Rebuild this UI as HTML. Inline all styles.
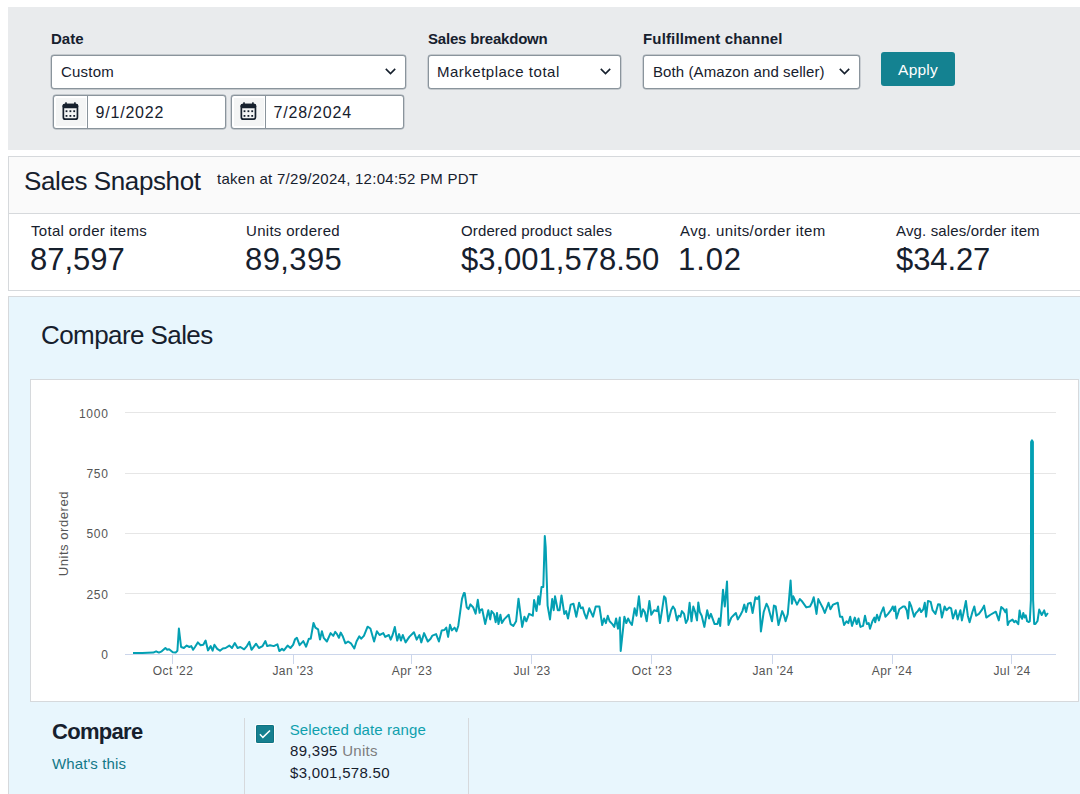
<!DOCTYPE html>
<html><head><meta charset="utf-8">
<style>
*{box-sizing:border-box;margin:0;padding:0}
html,body{width:1080px;height:794px;overflow:hidden;background:#fff;font-family:"Liberation Sans",sans-serif;color:#16202d}
.abs{position:absolute;white-space:nowrap}
#filters{position:absolute;left:8px;top:7px;width:1080px;height:143px;background:#e9ebed}
.lbl{position:absolute;font-weight:bold;font-size:15px;white-space:nowrap}
.sel{position:absolute;top:55px;height:34px;background:#fff;border:1px solid #8a949c;box-shadow:0 0 0 0.4px rgba(138,148,156,0.8);border-radius:3px;font-size:15px;padding-left:9px;line-height:32px;white-space:nowrap;letter-spacing:0.2px}
.chev{position:absolute;top:11.7px;width:11px;height:7px}
.dt{position:absolute;top:95px;height:34px;width:173px;background:#fff;border:1px solid #8a949c;box-shadow:0 0 0 0.4px rgba(138,148,156,0.8);border-radius:3px;font-size:16px;line-height:32px;white-space:nowrap;letter-spacing:0.8px}
.dt .ic{position:absolute;left:2px;top:2px;width:30px;height:28px;background:#f4f5f5}
.dt .dv{position:absolute;left:33px;top:0;width:1px;height:32px;background:#8a949c}
.dt .tx{position:absolute;left:41.5px;top:1px}
#apply{position:absolute;left:881px;top:52px;width:74px;height:34px;background:#148291;border-radius:3px;color:#fff;font-size:15.5px;line-height:36px;text-align:center;letter-spacing:0.2px}
#snap{position:absolute;left:8px;top:156px;width:1080px;height:135px;border:1px solid #d6d9dc;background:#fff}
#snaphead{position:absolute;left:0;top:0;width:100%;height:57px;background:#fafafa;border-bottom:1px solid #d6d9dc}
.ml{position:absolute;font-size:15px;white-space:nowrap;top:222px;letter-spacing:0.3px}
.mv{position:absolute;font-size:31px;white-space:nowrap;top:241.5px;letter-spacing:0px}
#cmp{position:absolute;left:8px;top:296px;width:1080px;height:510px;background:#e8f6fd;border:1px solid #d6d9dc}
#chartbox{position:absolute;left:30px;top:379px;width:1049px;height:323px;background:#fff;border:1px solid #d6d9dc}
.axl{font-family:"Liberation Sans",sans-serif;font-size:12px;fill:#555}
</style></head><body>
<div id="filters"></div>
<div class="lbl" style="left:51px;top:30px">Date</div>
<div class="sel" style="left:51px;width:355px">Custom<span style="position:absolute;left:333px;top:0"><svg class="chev" viewBox="0 0 11 7"><path d="M0.8 0.9 L5.5 5.6 L10.2 0.9" fill="none" stroke="#16202d" stroke-width="1.6"/></svg></span></div>
<div class="dt" style="left:53px"><div class="ic"></div><div class="dv"></div><span class="tx">9/1/2022</span></div>
<svg class="abs" style="left:62px;top:102px" width="18" height="20" viewBox="0 0 18 20">
<rect x="1.35" y="2.65" width="14.1" height="14.5" rx="2" fill="none" stroke="#16202d" stroke-width="1.7"/>
<rect x="0.5" y="1.8" width="15.8" height="4.4" rx="2" fill="#16202d"/>
<rect x="3.2" y="0.3" width="1.6" height="2.5" fill="#16202d"/><rect x="12.1" y="0.3" width="1.6" height="2.5" fill="#16202d"/>
<g fill="#16202d"><rect x="3.6" y="8.3" width="1.8" height="1.8"/><rect x="7.5" y="8.3" width="1.8" height="1.8"/><rect x="11.3" y="8.3" width="1.8" height="1.8"/>
<rect x="3.6" y="13" width="1.8" height="1.8"/><rect x="7.5" y="13" width="1.8" height="1.8"/><rect x="11.3" y="13" width="1.8" height="1.8"/></g>
</svg>
<div class="dt" style="left:231px"><div class="ic"></div><div class="dv"></div><span class="tx">7/28/2024</span></div>
<svg class="abs" style="left:240px;top:102px" width="18" height="20" viewBox="0 0 18 20">
<rect x="1.35" y="2.65" width="14.1" height="14.5" rx="2" fill="none" stroke="#16202d" stroke-width="1.7"/>
<rect x="0.5" y="1.8" width="15.8" height="4.4" rx="2" fill="#16202d"/>
<rect x="3.2" y="0.3" width="1.6" height="2.5" fill="#16202d"/><rect x="12.1" y="0.3" width="1.6" height="2.5" fill="#16202d"/>
<g fill="#16202d"><rect x="3.6" y="8.3" width="1.8" height="1.8"/><rect x="7.5" y="8.3" width="1.8" height="1.8"/><rect x="11.3" y="8.3" width="1.8" height="1.8"/>
<rect x="3.6" y="13" width="1.8" height="1.8"/><rect x="7.5" y="13" width="1.8" height="1.8"/><rect x="11.3" y="13" width="1.8" height="1.8"/></g>
</svg>
<div class="lbl" style="left:428px;top:30px;letter-spacing:-0.2px">Sales breakdown</div>
<div class="sel" style="left:428px;width:193px;letter-spacing:0.5px;padding-left:8px">Marketplace total<span style="position:absolute;left:171px;top:0"><svg class="chev" viewBox="0 0 11 7"><path d="M0.8 0.9 L5.5 5.6 L10.2 0.9" fill="none" stroke="#16202d" stroke-width="1.6"/></svg></span></div>
<div class="lbl" style="left:643px;top:30px;letter-spacing:0.15px">Fulfillment channel</div>
<div class="sel" style="left:643px;width:217px;letter-spacing:0.1px">Both (Amazon and seller)<span style="position:absolute;left:195px;top:0"><svg class="chev" viewBox="0 0 11 7"><path d="M0.8 0.9 L5.5 5.6 L10.2 0.9" fill="none" stroke="#16202d" stroke-width="1.6"/></svg></span></div>
<div id="apply">Apply</div>

<div id="snap"><div id="snaphead"></div></div>
<div class="abs" style="left:24px;top:166px;font-size:26px;letter-spacing:-0.4px">Sales Snapshot</div>
<div class="abs" style="left:217px;top:169.5px;font-size:15px;letter-spacing:0.27px">taken at 7/29/2024, 12:04:52 PM PDT</div>
<div class="ml" style="left:31px">Total order items</div><div class="mv" style="left:30px">87,597</div>
<div class="ml" style="left:246px">Units ordered</div><div class="mv" style="left:245px;letter-spacing:0.4px">89,395</div>
<div class="ml" style="left:461px;letter-spacing:0.13px">Ordered product sales</div><div class="mv" style="left:461px;letter-spacing:0px">$3,001,578.50</div>
<div class="ml" style="left:680px;letter-spacing:0.4px">Avg. units/order item</div><div class="mv" style="left:678px;letter-spacing:0.9px">1.02</div>
<div class="ml" style="left:896px;letter-spacing:0.15px">Avg. sales/order item</div><div class="mv" style="left:896px;letter-spacing:-0.1px">$34.27</div>

<div id="cmp"></div>
<div class="abs" style="left:41px;top:320px;font-size:26px;letter-spacing:-0.58px">Compare Sales</div>
<div id="chartbox"></div>
<svg class="abs" style="left:0;top:0" width="1080" height="794" viewBox="0 0 1080 794">
<g stroke="#e6e6e6" stroke-width="1">
<line x1="125" y1="412.5" x2="1056" y2="412.5"/>
<line x1="125" y1="473.5" x2="1056" y2="473.5"/>
<line x1="125" y1="533.5" x2="1056" y2="533.5"/>
<line x1="125" y1="593.5" x2="1056" y2="593.5"/>
</g>
<line x1="125" y1="654.5" x2="1056" y2="654.5" stroke="#ccd6eb" stroke-width="1"/>
<g stroke="#ccd6eb" stroke-width="1">
<line x1="172.5" y1="654" x2="172.5" y2="664"/><line x1="293.5" y1="654" x2="293.5" y2="664"/><line x1="411.5" y1="654" x2="411.5" y2="664"/><line x1="531.5" y1="654" x2="531.5" y2="664"/><line x1="651.5" y1="654" x2="651.5" y2="664"/><line x1="772.5" y1="654" x2="772.5" y2="664"/><line x1="892.5" y1="654" x2="892.5" y2="664"/><line x1="1011.5" y1="654" x2="1011.5" y2="664"/>
</g>
<g class="axl" text-anchor="end" style="letter-spacing:0.8px">
<text x="108.8" y="418">1000</text><text x="108.8" y="478">750</text><text x="108.8" y="538">500</text><text x="108.8" y="599">250</text><text x="108.8" y="659">0</text>
</g>
<text class="axl" transform="translate(68,533.6) rotate(-90)" text-anchor="middle" style="font-size:13px;letter-spacing:0.55px">Units ordered</text>
<g class="axl" text-anchor="middle" style="letter-spacing:0.4px">
<text x="173" y="674.5">Oct '22</text><text x="293" y="674.5">Jan '23</text><text x="412" y="674.5">Apr '23</text><text x="532" y="674.5">Jul '23</text><text x="652" y="674.5">Oct '23</text><text x="773" y="674.5">Jan '24</text><text x="892" y="674.5">Apr '24</text><text x="1012" y="674.5">Jul '24</text>
</g>
<path d="M133.0,653.1 L142.2,653.1 L153.3,652.6 L156.1,651.3 L158.9,652.6 L161.7,651.3 L165.4,648.0 L167.2,649.8 L169.1,649.3 L172.8,652.2 L175.6,652.6 L177.4,650.7 L178.9,628.5 L181.1,647.0 L183.9,648.0 L186.7,645.6 L189.4,647.0 L191.3,646.1 L193.1,649.8 L195.0,647.0 L197.8,642.4 L200.6,645.2 L203.3,644.8 L205.6,640.6 L208.0,650.4 L210.7,646.1 L212.6,650.7 L214.4,644.8 L217.2,648.9 L220.0,650.7 L222.8,648.5 L225.6,648.0 L229.3,645.6 L232.0,648.0 L234.8,643.0 L237.6,648.0 L240.4,647.0 L244.1,649.3 L246.9,646.1 L249.3,641.9 L251.5,649.8 L256.1,643.7 L258.9,648.0 L262.6,646.1 L265.4,641.1 L267.2,646.1 L270.0,645.2 L273.7,646.1 L277.4,644.3 L279.3,651.1 L282.0,648.9 L283.9,650.4 L287.6,645.6 L290.4,648.0 L293.1,644.8 L295.0,639.3 L296.9,637.8 L299.6,645.2 L303.3,641.1 L306.1,646.7 L308.9,638.7 L310.7,638.7 L313.5,623.0 L315.4,627.6 L318.1,629.4 L320.0,639.6 L321.9,631.3 L323.7,637.8 L326.9,641.5 L330.6,633.1 L333.3,635.9 L335.2,631.9 L337.0,634.1 L338.9,637.8 L340.7,632.6 L342.6,635.9 L345.4,643.3 L348.1,641.5 L350.9,643.3 L354.3,648.5 L356.5,641.5 L359.3,636.3 L361.1,638.7 L363.9,635.9 L367.6,626.7 L370.4,628.5 L374.1,641.5 L376.9,631.3 L379.6,635.0 L383.3,633.1 L385.2,636.9 L388.9,635.0 L390.7,639.6 L392.6,635.0 L394.8,627.0 L397.2,640.6 L399.1,634.1 L400.9,640.6 L402.8,635.0 L405.6,642.4 L409.3,636.9 L413.9,632.2 L416.7,639.6 L419.4,635.0 L421.3,642.4 L424.1,633.1 L427.8,641.5 L430.6,638.7 L432.4,635.6 L436.1,634.1 L438.9,641.5 L441.7,630.4 L444.4,630.0 L446.3,627.6 L448.1,636.9 L450.0,624.8 L451.9,630.4 L454.6,627.6 L456.5,631.3 L458.3,625.7 L460.2,611.9 L462.0,598.9 L463.9,593.0 L464.8,593.3 L466.7,607.2 L468.5,609.1 L470.4,604.4 L473.1,607.2 L475.6,613.7 L477.8,599.8 L479.6,612.8 L480.0,610.2 L482.2,609.3 L485.2,624.1 L488.3,610.2 L490.2,619.4 L491.5,611.1 L493.9,613.9 L495.7,622.2 L497.0,613.0 L498.5,624.1 L500.4,614.8 L501.9,623.1 L504.1,619.4 L508.7,614.8 L510.6,624.1 L513.3,625.9 L516.1,621.3 L518.5,598.7 L522.2,626.9 L524.4,616.7 L526.3,621.3 L529.1,613.9 L532.8,615.7 L534.1,600.0 L536.5,611.1 L538.3,596.3 L539.6,604.6 L541.5,587.0 L543.3,587.0 L544.8,536.1 L545.7,547.2 L547.6,605.6 L550.0,619.4 L552.2,599.1 L553.7,610.2 L555.0,596.3 L557.8,610.2 L559.6,610.2 L561.5,595.4 L564.3,613.9 L566.1,611.1 L568.0,618.5 L570.7,604.6 L573.5,603.7 L576.3,616.7 L579.1,602.8 L580.9,608.3 L582.8,607.4 L584.6,613.9 L586.5,618.5 L589.3,608.3 L593.0,616.7 L595.7,606.5 L599.4,606.5 L602.2,625.0 L604.1,618.5 L605.9,623.1 L607.8,615.7 L609.6,621.3 L612.4,624.1 L614.3,626.9 L616.1,618.5 L618.0,628.7 L619.8,617.6 L620.7,650.9 L624.4,616.7 L626.3,623.1 L628.1,618.5 L630.0,622.2 L631.9,625.0 L634.6,608.3 L636.5,615.7 L638.9,596.3 L641.1,616.7 L643.0,609.3 L644.8,612.0 L646.7,621.3 L649.4,600.9 L651.3,614.8 L654.1,610.2 L656.9,611.1 L658.1,606.5 L660.0,623.1 L661.9,611.1 L664.1,596.3 L665.6,598.1 L668.3,621.3 L671.1,610.2 L673.0,606.5 L674.8,609.3 L677.0,620.4 L678.5,615.7 L680.4,616.7 L681.9,611.1 L684.1,613.9 L685.9,623.1 L687.8,619.4 L689.6,602.8 L691.5,621.3 L693.3,606.5 L695.2,612.0 L697.0,620.4 L698.3,602.4 L699.8,612.0 L701.7,615.7 L704.4,626.9 L707.2,610.2 L709.1,618.5 L710.9,613.9 L714.6,624.1 L717.4,624.1 L718.9,618.5 L720.2,625.9 L723.0,589.8 L724.8,606.5 L727.0,581.5 L728.5,625.0 L731.3,617.6 L734.1,614.8 L735.9,613.0 L737.8,619.4 L740.6,614.8 L742.4,611.1 L744.3,604.6 L746.1,612.0 L748.0,603.7 L750.7,602.8 L752.6,613.0 L755.4,597.2 L757.2,599.1 L759.1,596.3 L760.9,631.5 L763.7,612.0 L766.5,603.7 L768.3,607.4 L772.0,621.3 L773.9,605.6 L775.7,606.5 L778.5,625.0 L782.2,611.1 L784.1,615.7 L785.6,621.3 L787.8,613.9 L790.6,580.6 L791.9,603.7 L793.3,596.3 L797.0,604.6 L799.8,599.1 L801.7,600.9 L806.3,607.4 L810.0,606.5 L811.9,602.8 L813.7,597.2 L816.5,613.9 L818.3,599.1 L821.1,604.6 L823.0,608.3 L824.8,613.0 L828.5,602.8 L830.4,609.3 L833.1,604.6 L837.8,602.8 L840.0,616.7 L842.2,616.7 L844.1,625.0 L846.5,621.3 L848.3,623.1 L850.2,616.7 L852.0,625.9 L854.8,617.6 L856.7,624.1 L858.5,618.5 L860.4,626.9 L863.1,625.9 L865.0,615.7 L866.9,624.1 L868.7,623.1 L870.0,628.7 L872.4,621.3 L874.3,617.6 L875.2,622.2 L877.0,614.8 L878.9,620.4 L880.7,613.9 L883.5,607.4 L885.4,616.7 L888.1,613.9 L890.9,610.2 L892.8,606.5 L894.1,611.1 L895.2,606.5 L896.5,618.5 L899.3,609.3 L903.0,606.5 L904.8,606.5 L906.7,610.2 L908.1,618.5 L909.4,601.9 L911.3,606.5 L914.1,616.7 L915.9,613.0 L917.8,611.1 L919.6,608.3 L921.1,612.0 L923.3,609.3 L924.8,602.8 L926.1,616.7 L928.0,600.9 L930.7,601.9 L932.6,610.2 L935.4,613.9 L938.1,604.3 L940.0,604.6 L941.9,617.6 L944.6,606.5 L946.5,610.2 L949.3,607.4 L951.1,608.3 L953.0,618.5 L955.7,610.2 L957.6,619.4 L960.4,610.2 L961.9,620.4 L963.7,612.0 L965.9,600.9 L967.8,615.7 L969.6,622.2 L972.4,612.0 L974.3,606.5 L976.1,615.7 L978.9,613.9 L981.7,610.2 L984.1,605.6 L986.3,617.6 L989.1,615.7 L990.0,615.0 L995.8,611.7 L998.8,620.4 L1001.2,607.1 L1003.3,608.8 L1005.4,612.1 L1006.5,609.2 L1007.7,625.0 L1009.2,621.7 L1012.5,619.6 L1014.2,622.1 L1015.8,620.8 L1018.3,624.2 L1019.6,610.4 L1020.8,616.7 L1022.1,618.8 L1023.3,612.9 L1024.6,617.5 L1025.8,615.4 L1027.1,621.2 L1028.8,622.1 L1029.8,621.2 L1030.9,600.0 L1031.1,442.0 L1032.0,440.3 L1032.9,442.0 L1033.1,600.0 L1034.2,624.0 L1035.4,624.0 L1037.5,621.0 L1039.2,609.6 L1040.8,613.0 L1041.7,615.0 L1044.2,610.4 L1045.8,616.0 L1047.9,613.0" fill="none" stroke="#03a0b3" stroke-width="2" stroke-linejoin="round"/>
</svg>

<div class="abs" style="left:52px;top:719px;font-size:22px;font-weight:bold;letter-spacing:-0.7px">Compare</div>
<div class="abs" style="left:52px;top:755px;font-size:15px;color:#137888;letter-spacing:0.1px">What's this</div>
<div class="abs" style="left:244px;top:718px;width:1px;height:80px;background:#d6d9dc"></div>
<div class="abs" style="left:468px;top:718px;width:1px;height:80px;background:#d6d9dc"></div>
<svg class="abs" style="left:255px;top:724px" width="20" height="20" viewBox="0 0 20 20"><rect x="0.5" y="0.5" width="19" height="19" rx="1.5" fill="none" stroke="#fff" stroke-width="1"/><rect x="1.5" y="1.5" width="17" height="17" rx="0.6" fill="#168090" stroke="#0f7282" stroke-width="1"/><path d="M4.9 10.3 L7.9 13.4 L15 6.5" fill="none" stroke="#fff" stroke-width="1.5"/></svg>
<div class="abs" style="left:289.7px;top:720.8px;font-size:15px;color:#0fa0ad;letter-spacing:0.1px">Selected date range</div>
<div class="abs" style="left:290px;top:742px;font-size:15px;letter-spacing:0.3px">89,395 <span style="color:#7d7d7d">Units</span></div>
<div class="abs" style="left:290px;top:764px;font-size:15px;letter-spacing:0.3px">$3,001,578.50</div>
</body></html>
